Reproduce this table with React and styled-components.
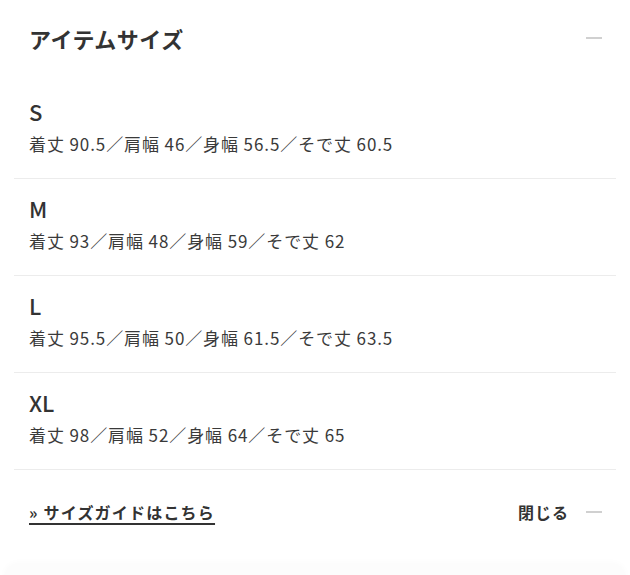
import React from "react";
import styled, { createGlobalStyle } from "styled-components";

const SIZES = [
  { name: "S", detail: "着丈 90.5／肩幅 46／身幅 56.5／そで丈 60.5" },
  { name: "M", detail: "着丈 93／肩幅 48／身幅 59／そで丈 62" },
  { name: "L", detail: "着丈 95.5／肩幅 50／身幅 61.5／そで丈 63.5" },
  { name: "XL", detail: "着丈 98／肩幅 52／身幅 64／そで丈 65" },
];

export default function App() {
  return (
    <>
      <GlobalStyle />
      <Panel>
        <Header>
          <Title>アイテムサイズ</Title>
          <Minus />
        </Header>

        <List>
          {SIZES.map((s) => (
            <Row key={s.name}>
              <SizeName>{s.name}</SizeName>
              <Detail>{s.detail}</Detail>
            </Row>
          ))}
        </List>

        <Footer>
          <GuideLink href="#">» サイズガイドはこちら</GuideLink>
          <CloseButton>
            閉じる
            <Minus />
          </CloseButton>
        </Footer>
      </Panel>
      <NextCard />
    </>
  );
}

const GlobalStyle = createGlobalStyle`
  html, body {
    margin: 0;
    padding: 0;
    background: #fff;
  }
  body {
    font-family: "Noto Sans CJK JP", "Noto Sans", sans-serif;
    color: #333;
  }
`;

const Panel = styled.div`
  width: 630px;
  box-sizing: border-box;
  padding: 0 14px;
  background: #fff;
`;

const Header = styled.div`
  display: flex;
  align-items: center;
  justify-content: space-between;
  padding: 22px 14px 28px 15px;
`;

const Title = styled.h2`
  margin: 0;
  font-size: 22px;
  line-height: 32px;
  font-weight: 700;
  letter-spacing: 0.5px;
  color: #333;
`;

const Minus = styled.span`
  display: inline-block;
  width: 16px;
  height: 2px;
  background: #d0d0d0;
`;

const List = styled.div`
  display: flex;
  flex-direction: column;
`;

const Row = styled.div`
  display: flex;
  flex-direction: column;
  gap: 5px;
  padding: 14px 15px 21px;
  border-bottom: 1px solid #ececec;
`;

const SizeName = styled.div`
  font-size: 22px;
  line-height: 30px;
  font-weight: 500;
  color: #333;
`;

const Detail = styled.div`
  font-size: 17px;
  line-height: 26px;
  letter-spacing: 0.9px;
  color: #3a3a3a;
`;

const Footer = styled.div`
  display: flex;
  align-items: center;
  justify-content: space-between;
  padding: 30px 14px 40px 15px;
`;

const GuideLink = styled.a`
  font-size: 16px;
  line-height: 24px;
  font-weight: 700;
  letter-spacing: 1.2px;
  color: #333;
  text-decoration: underline;
  text-decoration-thickness: 2px;
  text-underline-offset: 4px;
`;

const CloseButton = styled.div`
  display: flex;
  align-items: center;
  gap: 17px;
  font-size: 16px;
  line-height: 24px;
  font-weight: 700;
  letter-spacing: 1px;
  color: #333;
  cursor: pointer;
`;

const NextCard = styled.div`
  margin: 0 4px;
  height: 20px;
  border-radius: 14px 14px 0 0;
  background: #fcfcfc;
  box-shadow: 0 -2px 6px rgba(0, 0, 0, 0.02);
`;
